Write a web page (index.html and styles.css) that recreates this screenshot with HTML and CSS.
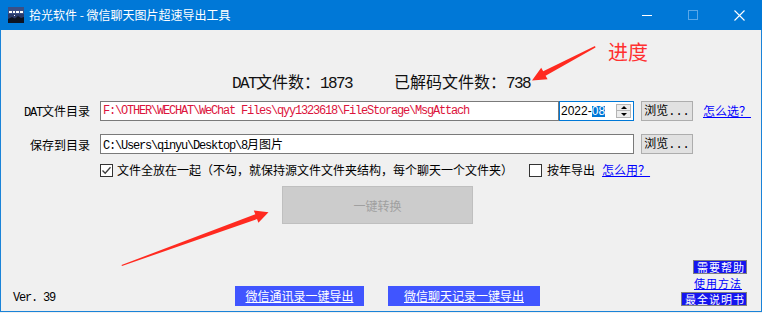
FILE: index.html
```html
<!DOCTYPE html>
<html lang="zh-CN">
<head>
  <meta charset="UTF-8">
  <title>拾光软件 - 微信聊天图片超速导出工具</title>
  <link rel="stylesheet" href="styles.css">
</head>
<body>
  <div class="window">
    <div class="titlebar">
      <svg class="app-icon" width="16" height="16" viewBox="0 0 16 16">
        <rect width="16" height="16" fill="#2a3a6a"/>
        <rect width="16" height="7" fill="#3b4f86"/>
        <g fill="#fff">
          <rect x="1" y="4" width="3" height="2"/>
          <rect x="5" y="4" width="2" height="2"/>
          <rect x="8" y="4" width="3" height="2"/>
          <rect x="12" y="4" width="3" height="2"/>
          <rect x="6" y="8" width="1" height="1"/>
        </g>
        <path d="M0 12 L4 10 L7 11.5 L10 9 L13 11 L16 10 V16 H0Z" fill="#0d1322"/>
      </svg>
      <span class="title">拾光软件 - 微信聊天图片超速导出工具</span>
      <div class="controls">
        <span class="ctrl">
          <svg width="10" height="10" viewBox="0 0 10 10"><path d="M0 5.5H10" stroke="#fff" stroke-width="1"/></svg>
        </span>
        <span class="ctrl">
          <svg width="10" height="10" viewBox="0 0 10 10"><rect x="0.5" y="0.5" width="9" height="9" fill="none" stroke="#5aa7e8"/></svg>
        </span>
        <span class="ctrl">
          <svg width="11" height="11" viewBox="0 0 11 11"><path d="M0.5 0.5L10.5 10.5M10.5 0.5L0.5 10.5" stroke="#fff" stroke-width="1.1"/></svg>
        </span>
      </div>
    </div>

    <div class="client">
      <div class="stats">
        <span><span class="a">DAT</span>文件数：<span class="a">1873</span></span>
        <span class="decoded">已解码文件数：<span class="a">738</span></span>
      </div>

      <div class="row">
        <label class="label"><span class="a">DAT</span>文件目录</label>
        <div class="textbox path-src">F:\OTHER\WECHAT\WeChat Files\qyy1323618\FileStorage\MsgAttach</div>
        <div class="datebox">
          <span>2022-</span><span class="sel">08</span>
          <span class="spin"><i class="up"></i><i class="down"></i></span>
        </div>
        <button class="browse">浏览<span class="a">...</span></button>
        <a class="link" href="#">怎么选？</a>
      </div>

      <div class="row row-save">
        <label class="label">保存到目录</label>
        <div class="textbox path-dst">C:\Users\qinyu\Desktop\8<span class="cjk">月图片</span></div>
        <button class="browse">浏览<span class="a">...</span></button>
      </div>

      <div class="checks">
        <span class="box checked">
          <svg width="11" height="11" viewBox="0 0 11 11"><path d="M1.5 5.5L4.2 8.3L9.5 2.3" fill="none" stroke="#3c3c3c" stroke-width="1.3"/></svg>
        </span>
        <span>文件全放在一起（不勾，就保持源文件文件夹结构，每个聊天一个文件夹）</span>
        <span class="box box-year"></span>
        <span>按年导出</span>
        <a class="link link-use" href="#">怎么用？</a>
      </div>

      <button class="convert" disabled>一键转换</button>

      <div class="footer">
        <span class="ver a">Ver. 39</span>
        <a class="export" href="#">微信通讯录一键导出</a>
        <a class="export export-chat" href="#">微信聊天记录一键导出</a>
        <div class="help">
          <a class="tag" href="#">需要帮助</a>
          <a class="link link-how" href="#">使用方法</a>
          <a class="tag tag-doc" href="#">最全说明书</a>
        </div>
      </div>
    </div>

    <!-- 标注 -->
    <svg class="marks" width="762" height="313" viewBox="0 0 762 313">
      <polygon fill="#ff2a20" points="595,46 543.2,71.3 541.2,67.8 532,80.5 547.6,79.2 545.6,75.7 595.5,47.5"/>
      <polygon fill="#ff2a20" points="121.5,265 255.3,214.3 253.8,210.6 268.5,212.2 258.4,222.8 257,219.1 122,266"/>
    </svg>
    <span class="progress-note">进度</span>
  </div>
</body>
</html>
```

FILE: styles.css
```css
body {
  margin: 0;
  background: #f0f0f0;
  font-family: "Noto Sans CJK SC", "Noto Sans", sans-serif;
  font-size: 12px;
  color: #000;
}

.window {
  position: relative;
  width: 762px;
  height: 312px;
  display: flex;
  flex-direction: column;
}

/* 标题栏 */
.titlebar {
  height: 30px;
  background: #0078d7;
  display: flex;
  align-items: center;
  padding-left: 8px;
  color: #fff;
}
.app-icon { margin-right: 5px; }
.title { line-height: 16px; }
.controls { margin-left: auto; display: flex; }
.ctrl {
  width: 46px;
  height: 30px;
  display: flex;
  align-items: center;
  justify-content: center;
}

/* 窗口内容 */
.client {
  flex: 1;
  display: flex;
  flex-direction: column;
  border: 1px solid #1a83d8;
  border-top: 0;
  padding-bottom: 5px;
}

.a {
  font-family: "Liberation Mono", monospace;
  letter-spacing: -1.2px;
}

.stats {
  margin-top: 41px;
  height: 20px;
  line-height: 20px;
  padding-left: 231px;
  font-size: 16px;
  color: #111;
  display: flex;
}
.stats .a { letter-spacing: -1.6px; }
.decoded { margin-left: 42px; }

.row {
  margin-top: 10px;
  height: 20px;
  display: flex;
  align-items: center;
}
.row-save { margin-top: 13px; }

.label {
  width: 89px;
  margin-right: 10px;
  text-align: right;
}

.textbox {
  height: 20px;
  box-sizing: border-box;
  border: 1px solid #7a7a7a;
  background: #fff;
  padding-left: 2px;
  line-height: 18px;
  font-family: "Liberation Mono", "Noto Sans CJK SC", monospace;
  letter-spacing: -1.2px;
  white-space: nowrap;
  overflow: hidden;
}
.textbox .cjk { letter-spacing: 0; font-family: "Noto Sans CJK SC", sans-serif; }
.path-src { width: 459px; color: #dc143c; }
.path-dst { width: 534px; }

.datebox {
  width: 75px;
  height: 20px;
  box-sizing: border-box;
  border: 1px solid #0078d7;
  background: #fff;
  display: flex;
  align-items: center;
  padding-left: 1px;
  font-family: "Liberation Sans", sans-serif;
  font-size: 12px;
}
.sel {
  background: #0078d7;
  color: #fff;
  line-height: 11px;
  height: 11px;
}
.spin {
  margin-left: auto;
  margin-right: 2px;
  width: 15px;
  display: flex;
  flex-direction: column;
}
.spin i {
  height: 7px;
  box-sizing: border-box;
  border: 1px solid #b4b4b4;
  background: #ececec;
  display: flex;
  align-items: center;
  justify-content: center;
}
.spin i + i { border-top: 0; }
.spin i::after {
  content: "";
  border-left: 3px solid transparent;
  border-right: 3px solid transparent;
}
.spin .up::after { border-bottom: 3px solid #000; }
.spin .down::after { border-top: 3px solid #000; }

.browse {
  margin-left: 7px;
  width: 52px;
  height: 20px;
  padding: 0;
  border: 1px solid #adadad;
  background: #e1e1e1;
  font-family: "Noto Sans CJK SC", sans-serif;
  font-size: 12px;
  color: #000;
  line-height: 16px;
}
.browse .a { letter-spacing: 0; }

.link {
  margin-left: 10px;
  color: #0000ff;
  text-decoration: underline;
  line-height: 14px;
}

.checks {
  margin-top: 9px;
  margin-left: 99px;
  height: 14px;
  display: flex;
  align-items: center;
  line-height: 14px;
}
.box {
  width: 13px;
  height: 13px;
  box-sizing: border-box;
  border: 1px solid #333;
  background: #fff;
  margin-right: 4px;
  display: flex;
  align-items: center;
  justify-content: center;
}
.box-year { margin-left: 16px; margin-right: 5px; }
.link-use { margin-left: 7px; }

.convert {
  margin-top: 9px;
  margin-left: 281px;
  width: 191px;
  height: 38px;
  border: 1px solid #bfbfbf;
  background: #cccccc;
  color: #a0a0a0;
  font-family: "Noto Sans CJK SC", sans-serif;
  font-size: 12px;
  padding: 0;
}

.footer {
  margin-top: auto;
  display: flex;
  align-items: flex-end;
  padding-left: 12px;
}
.ver {
  width: 222px;
  line-height: 16px;
  font-size: 12px;
}
.export {
  width: 129px;
  height: 20px;
  background: #4055ff;
  color: #fff;
  text-decoration: underline;
  text-align: center;
  line-height: 20px;
}
.export-chat { width: 152px; margin-left: 24px; }

.help {
  margin-left: auto;
  margin-right: 14px;
  display: flex;
  flex-direction: column;
  align-items: flex-end;
  font-size: 11px;
  letter-spacing: 1px;
}
.tag {
  height: 14px;
  box-sizing: border-box;
  border: 1px solid #808080;
  background: #1515ee;
  color: #fff;
  text-decoration: none;
  line-height: 12px;
  padding: 0 1px 0 3px;
}
.link-how {
  margin: 3px 5px 0 0;
  line-height: 12px;
  height: 12px;
}
.tag-doc { margin-top: 3px; }

/* 红色标注 */
.marks {
  position: absolute;
  left: 0;
  top: 0;
  pointer-events: none;
}
.progress-note {
  position: absolute;
  left: 608px;
  top: 40px;
  font-size: 20px;
  line-height: 24px;
  color: #ff3030;
}
```
